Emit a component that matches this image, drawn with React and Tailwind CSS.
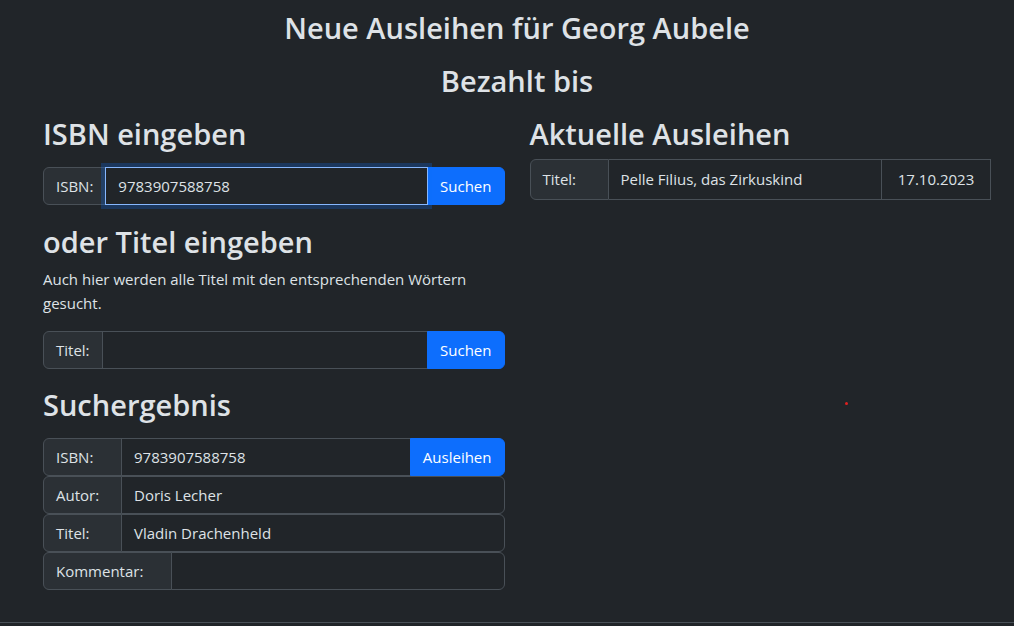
import React from 'react';

const font = { fontFamily: '"Open Sans", "Noto Sans", sans-serif' };

function Group({ label, labelWidth, value, button, focused, className = '' }) {
  return (
    <div className={`flex h-[38px] w-full ${className}`}>
      <span
        className={`flex items-center shrink-0 px-3 bg-[#2b3035] border border-[#495057] rounded-l-[6px] text-[15px] text-[#dee2e6] ${labelWidth || ''}`}
      >
        {label}
      </span>
      <div
        className={`flex-1 flex items-center px-3 -ml-px bg-[#212529] border text-[15px] text-[#dee2e6] ${
          focused
            ? 'border-[#86b7fe] relative z-10 shadow-[0_0_0_4px_rgba(13,110,253,0.25)]'
            : 'border-[#495057]'
        } ${button ? '' : 'rounded-r-[6px]'}`}
      >
        {value}
      </div>
      {button && (
        <button className="shrink-0 px-3 -ml-px bg-[#0d6efd] text-white text-[15px] rounded-r-[6px] border border-[#0d6efd]">
          {button}
        </button>
      )}
    </div>
  );
}

export default function App() {
  return (
    <div style={font} className="relative min-h-screen flex flex-col bg-[#212529] text-[#dee2e6]">
      <main className="pl-[43px] pr-[23px]">
        <h2 className="mt-[10px] h-[36px] leading-[36px] text-center text-[29px] font-semibold">
          Neue Ausleihen für Georg Aubele
        </h2>
        <h2 className="mt-[17px] h-[36px] leading-[36px] text-center text-[29px] font-semibold">
          Bezahlt bis
        </h2>

        <div className="grid grid-cols-2 gap-[25px] mt-[17px]">
          <section>
            <h2 className="h-[36px] leading-[36px] text-[29px] font-semibold">ISBN eingeben</h2>
            <Group className="mt-[15px]" label="ISBN:" value="9783907588758" button="Suchen" focused />

            <h2 className="mt-[19px] h-[36px] leading-[36px] text-[29px] font-semibold">oder Titel eingeben</h2>
            <p className="mt-[7px] text-[15px] leading-[24px]">
              Auch hier werden alle Titel mit den entsprechenden Wörtern gesucht.
            </p>
            <Group className="mt-[16px]" label="Titel:" value="" button="Suchen" />

            <h2 className="mt-[18px] h-[36px] leading-[36px] text-[29px] font-semibold">Suchergebnis</h2>
            <div className="mt-[15px]">
              <Group label="ISBN:" labelWidth="w-[79px]" value="9783907588758" button="Ausleihen" />
              <Group label="Autor:" labelWidth="w-[79px]" value="Doris Lecher" />
              <Group label="Titel:" labelWidth="w-[79px]" value="Vladin Drachenheld" />
              <Group label="Kommentar:" labelWidth="w-[129px]" value="" />
            </div>
          </section>

          <section>
            <h2 className="h-[36px] leading-[36px] text-[29px] font-semibold">Aktuelle Ausleihen</h2>
            <div className="mt-[7px] flex h-[41px] text-[15px]">
              <span className="flex items-center w-[79px] px-3 bg-[#2b3035] border border-[#495057] rounded-l-[6px]">
                Titel:
              </span>
              <span className="flex items-center flex-1 px-3 border-y border-r border-[#495057]">
                Pelle Filius, das Zirkuskind
              </span>
              <span className="flex items-center justify-center w-[109px] border-y border-r border-[#495057]">
                17.10.2023
              </span>
            </div>
          </section>
        </div>
      </main>

      <span className="absolute left-[845px] top-[402px] w-[3px] h-[3px] rounded-full bg-[#e02020]" />

      <footer className="mt-auto h-[4px] border-t border-[#495057]" />
    </div>
  );
}
